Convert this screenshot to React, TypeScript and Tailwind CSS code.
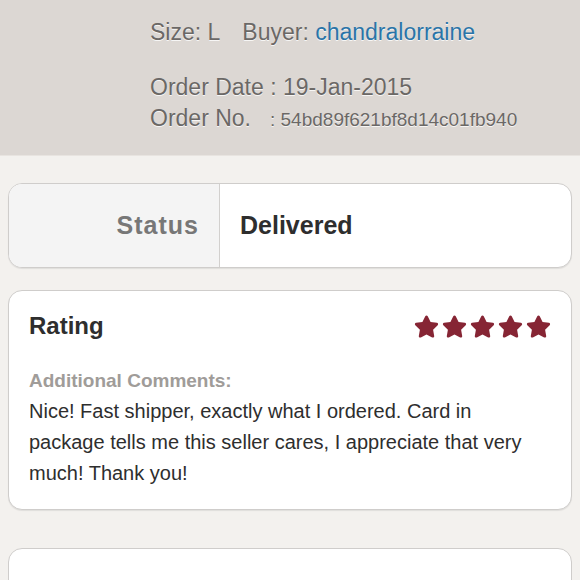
import { FaStar } from 'react-icons/fa'

const comment =
  'Nice! Fast shipper, exactly what I ordered. Card in package tells me this seller cares, I appreciate that very much! Thank you!'

function Stars({ count }: { count: number }) {
  return (
    <div className="flex items-center gap-[3px] text-[#862534]">
      {Array.from({ length: count }).map((_, i) => (
        <FaStar key={i} size={25} />
      ))}
    </div>
  )
}

export default function App() {
  const shadow = { textShadow: '0 1px 0 rgba(255,255,255,0.8)' }

  return (
    <div className="h-[580px] w-[580px] overflow-hidden bg-[#f3f1ee] [font-family:'Liberation_Sans',Arial,sans-serif]">
      <header className="h-[156px] border-b border-[#e8e4e0] bg-[#dcd7d3] pl-[150px] pt-[18px] text-[#6b6866]">
        <div className="flex text-[23px] leading-[28px]" style={shadow}>
          <span>Size: L</span>
          <span className="ml-[22px]">
            Buyer: <span className="text-[#2a74a8]">chandralorraine</span>
          </span>
        </div>
        <div className="mt-[26px] text-[23px] leading-[31px]" style={shadow}>
          Order Date : 19-Jan-2015
        </div>
        <div className="flex items-baseline text-[23px] leading-[31px]" style={shadow}>
          <span>Order No.</span>
          <span className="ml-[19px] text-[19px]">: 54bd89f621bf8d14c01fb940</span>
        </div>
      </header>

      <main className="flex flex-col px-[8px] pt-[27px]">
        <section className="flex h-[85px] overflow-hidden rounded-[14px] border border-[#cfcdcb] bg-white shadow-[0_1px_1px_rgba(0,0,0,0.08)]">
          <div className="flex w-[211px] items-center justify-end border-r border-[#d2d0ce] bg-[#f4f4f4] pr-[20px] text-[25px] font-bold tracking-[1px] text-[#777]">
            Status
          </div>
          <div className="flex flex-1 items-center pl-[20px] text-[25px] font-bold text-[#2e2e2e]">
            Delivered
          </div>
        </section>

        <section className="mt-[22px] rounded-[14px] border border-[#cfcdcb] bg-white px-[20px] pb-[20px] pt-[19px] shadow-[0_1px_1px_rgba(0,0,0,0.08)]">
          <div className="flex items-center justify-between">
            <h2 className="text-[24px] font-bold leading-[32px] text-[#2e2e2e]">Rating</h2>
            <Stars count={5} />
          </div>
          <div className="mt-[27px] text-[19px] font-bold leading-[24px] text-[#a09c99]">
            Additional Comments:
          </div>
          <p className="mt-[3px] text-[20px] leading-[31px] text-[#2e2e2e]">{comment}</p>
        </section>

        <section className="mt-[38px] h-[80px] rounded-[14px] border border-[#cfcdcb] bg-white" />
      </main>
    </div>
  )
}
